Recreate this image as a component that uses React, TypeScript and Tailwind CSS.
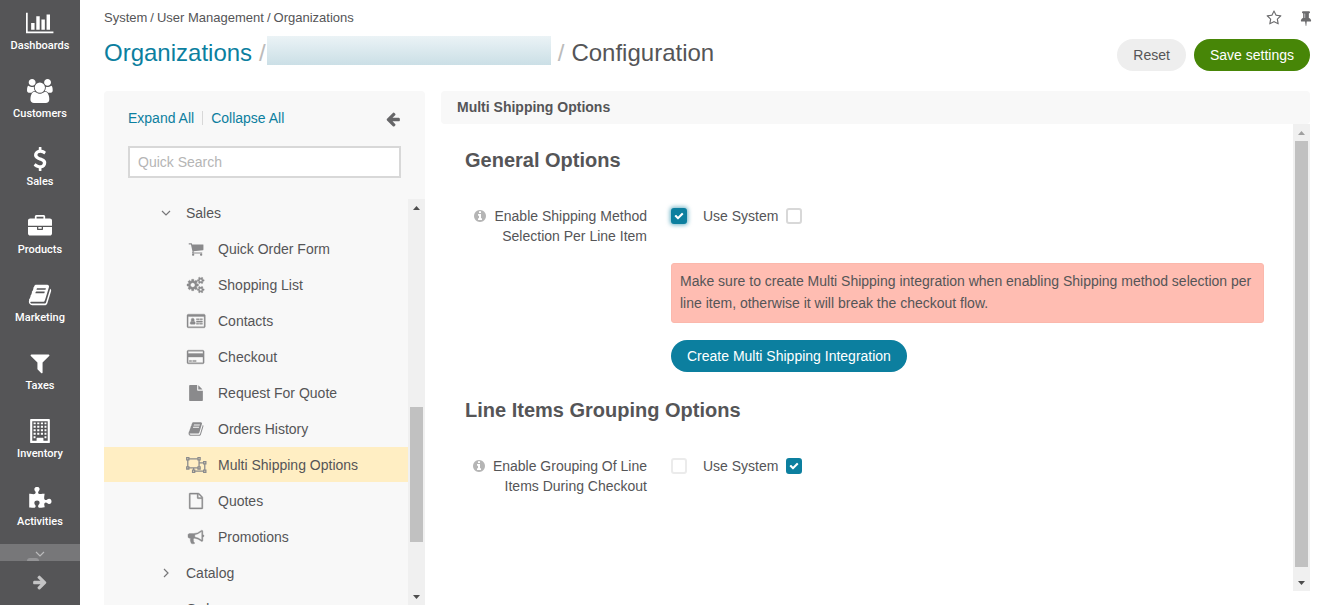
import { useState } from "react";
import type { ReactNode } from "react";

type Glyph = { w?: number; d: string; line?: string; bold?: boolean };

const glyphs: Record<string, Glyph> = {
  chart: {
    w: 2048,
    d: "M640 896v512h-256v-512h256zm384-512v1024h-256v-1024h256zm1024 1152v128h-2048v-1536h128v1408h1920zm-640-896v768h-256v-768h256zm384-384v1152h-256v-1152h256z",
  },
  users: {
    w: 1920,
    d: "M593 896q-162 5-265 128h-134q-82 0-138-40.5t-56-118.5q0-353 124-353 6 0 43.5 21t97.5 42.5 119 21.5q67 0 133-23-5 37-5 66 0 139 81 256zm1071 637q0 120-73 189.5t-194 69.5h-874q-121 0-194-69.5t-73-189.5q0-53 3.5-103.5t14-109 26.5-108.5 43-97.5 62-81 85.5-53.5 111.5-20q10 0 43 21.5t73 48 107 48 135 21.5 135-21.5 107-48 73-48 43-21.5q61 0 111.5 20t85.5 53.5 62 81 43 97.5 26.5 108.5 14 109 3.5 103.5zm-1024-1277q0 106-75 181t-181 75-181-75-75-181 75-181 181-75 181 75 75 181zm704 384q0 159-112.5 271.5t-271.5 112.5-271.5-112.5-112.5-271.5 112.5-271.5 271.5-112.5 271.5 112.5 112.5 271.5zm576 225q0 78-56 118.5t-138 40.5h-134q-103-123-265-128 81-117 81-256 0-29-5-66 66 23 133 23 59 0 119-21.5t97.5-42.5 43.5-21q124 0 124 353zm-128-609q0 106-75 181t-181 75-181-75-75-181 75-181 181-75 181 75 75 181z",
  },
  dollar: {
    d: "M1362 1185q0 153-99.5 263.5t-258.5 136.5v175q0 14-9 23t-23 9h-135q-13 0-22.5-9.5t-9.5-22.5v-175q-66-9-127.5-31t-101.5-44.5-74-48-46.5-37.5-17.5-18q-17-21-2-41l103-135q7-10 23-12 15-2 24 9l2 2q113 99 243 125 37 8 74 8 81 0 142.5-43t61.5-122q0-28-15-53t-33.5-42-58.5-37.5-66-32-80-32.5q-39-16-61.5-25t-61.5-26.5-62.5-31-56.5-35.5-53.5-42.5-43.5-49-35.5-58-21-66.5-8.5-78q0-138 98-242t255-134v-180q0-13 9.5-22.5t22.5-9.5h135q14 0 23 9t9 23v176q57 6 110.5 23t87 33.5 63.5 37.5 39 29 15 14q17 18 5 38l-81 146q-8 15-23 16-14 3-27-7-3-3-14.5-12t-39-26.5-58.5-32-74.5-26-85.5-11.5q-95 0-155 43t-60 111q0 26 8.5 48t29.5 41.5 39.5 33 56 31 60.5 27 70 27.5q53 20 81 31.5t76 35 75.5 42.5 62 50 53 63.5 31.5 76.5 13 94z",
  },
  briefcase: {
    d: "M640 256h512v-128h-512v128zm1152 640v480q0 66-47 113t-113 47h-1472q-66 0-113-47t-47-113v-480h672v160q0 26 19 45t45 19h320q26 0 45-19t19-45v-160h672zm-768 0v128h-256v-128h256zm768-480v384h-1792v-384q0-66 47-113t113-47h352v-160q0-40 28-68t68-28h576q40 0 68 28t28 68v160h352q66 0 113 47t47 113z",
  },
  book: {
    d: "M1703 478q40 57 18 129l-275 906q-19 64-76.5 107.5t-122.5 43.5h-923q-77 0-148.5-53.5t-99.5-131.5q-24-67-2-127 0-4 3-27t4-37q1-8-3-21.5t-3-19.5q2-11 8-21t16.5-23.5 16.5-23.5q23-38 45-91.5t30-91.5q3-10 .5-30t-.5-28q3-11 17-28t17-23q21-36 42-92t25-90q1-9-2.5-32t.5-28q4-13 22-30.5t22-22.5q19-26 42.5-84.5t27.5-96.5q1-8-3-25.5t-2-26.5q2-8 9-18t18-23 17-21q8-12 16.5-30.5t15-35 16-36 19.5-32 26.5-23.5 36-11.5 47.5 5.5l-1 3q38-9 51-9h761q74 0 114 56t18 130l-274 906q-36 119-71.5 153.5t-128.5 34.5h-869q-27 0-38 15-11 16-1 43 24 70 144 70h923q29 0 56-15.5t35-41.5l300-987q7-22 5-57 38 15 59 43zm-1064 2q-4 13 2 22.5t20 9.5h608q13 0 25.5-9.5t16.5-22.5l21-64q4-13-2-22.5t-20-9.5h-608q-13 0-25.5 9.5t-16.5 22.5zm-83 256q-4 13 2 22.5t20 9.5h608q13 0 25.5-9.5t16.5-22.5l21-64q4-13-2-22.5t-20-9.5h-608q-13 0-25.5 9.5t-16.5 22.5z",
  },
  filter: {
    d: "M1595 295q17 41-14 70l-493 493v742q0 42-39 59-13 5-25 5-27 0-45-19l-256-256q-19-19-19-45v-486l-493-493q-31-29-14-70 17-39 59-39h1280q42 0 59 39z",
  },
  building: {
    d: "M224 0h1344q64 0 64 64v1664q0 64-64 64h-1344q-64 0-64-64v-1664q0-64 64-64zM320 160v1472h320v-192q0-32 32-32h448q32 0 32 32v192h320v-1472zM416 256h160v144h-160zM688 256h160v144h-160zM960 256h160v144h-160zM1232 256h144v144h-144zM416 512h160v144h-160zM688 512h160v144h-160zM960 512h160v144h-160zM1232 512h144v144h-144zM416 768h160v144h-160zM688 768h160v144h-160zM960 768h160v144h-160zM1232 768h144v144h-144zM416 1024h160v144h-160zM688 1024h160v144h-160zM960 1024h160v144h-160zM1232 1024h144v144h-144zM416 1296h144v144h-144zM1232 1296h144v144h-144z",
  },
  puzzle: {
    d: "M1755 1083q0 81-44.5 135t-123.5 54q-41 0-77.5-17.5t-59-38-56.5-38-71-17.5q-110 0-110 124 0 39 16 115t15 115v5q-22 0-33 1-34 3-97.5 11.5t-115.5 13.5-98 5q-61 0-103-26.5t-42-83.5q0-37 17.5-71t38-56.5 38-59 17.5-77.5q0-79-54-123.5t-135-44.5q-84 0-143 45.5t-59 127.5q0 43 15 83t33.5 64.5 33.5 53 15 50.5q0 45-46 89-37 35-117 35-95 0-245-24-9-2-27.5-4t-27.5-4l-13-2q-1 0-3-1-2 0-2-1v-1024q2 1 17.5 3.5t34 5 21.5 3.5q150 24 245 24 80 0 117-35 46-44 46-89 0-22-15-50.5t-33.5-53-33.5-64.5-15-83q0-82 59-127.5t144-45.5q80 0 134 44.5t54 123.5q0 41-17.5 77.5t-38 59-38 56.5-17.5 71q0 57 42 83.5t103 26.5q64 0 180-15t163-17v2q-1 2-3.5 17.5t-5 34-3.5 21.5q-24 150-24 245 0 80 35 117 44 46 89 46 22 0 50.5-15t53-33.5 64.5-33.5 83-15q82 0 127.5 59t45.5 143z",
  },
  cart: {
    d: "M704 1536q0 52-38 90t-90 38-90-38-38-90 38-90 90-38 90 38 38 90zm896 0q0 52-38 90t-90 38-90-38-38-90 38-90 90-38 90 38 38 90zm128-1088v512q0 24-16.5 42.5t-40.5 21.5l-1044 122q13 60 13 70 0 16-24 64h920q26 0 45 19t19 45-19 45-45 19h-1024q-26 0-45-19t-19-45q0-11 8-31.5t16-36 21.5-40 15.5-29.5l-177-823h-204q-26 0-45-19t-19-45 19-45 45-19h256q16 0 28.5 6.5t19.5 15.5 13 24.5 8 26 5.5 29.5 4.5 26h1201q26 0 45 19t19 45z",
  },
  cogs: {
    w: 1920,
    bold: true,
    d: "M896 896q0-106-75-181t-181-75-181 75-75 181 75 181 181 75 181-75 75-181zm768 512q0-52-38-90t-90-38-90 38-38 90q0 53 37.5 90.5t90.5 37.5 90.5-37.5 37.5-90.5zm0-1024q0-52-38-90t-90-38-90 38-38 90q0 53 37.5 90.5t90.5 37.5 90.5-37.5 37.5-90.5zm-384 421v185q0 10-7 19.5t-16 10.5l-155 24q-11 35-32 76 34 48 90 115 7 11 7 20 0 12-7 19-23 30-82.5 89.5t-78.5 59.5q-11 0-21-7l-115-90q-37 19-77 31-11 108-23 155-7 24-30 24h-186q-11 0-20-7.5t-10-17.5l-23-153q-34-10-75-31l-118 89q-7 7-20 7-11 0-21-8-144-133-144-160 0-9 7-19 10-14 41-53t47-61q-23-44-35-82l-152-24q-10-1-17-9.5t-7-19.5v-185q0-10 7-19.5t16-10.5l155-24q11-35 32-76-34-48-90-115-7-11-7-20 0-12 7-20 22-30 82-89t79-59q11 0 21 7l115 90q34-18 77-32 11-108 23-154 7-24 30-24h186q11 0 20 7.5t10 17.5l23 153q34 10 75 31l118-89q8-7 20-7 11 0 21 8 144 133 144 160 0 8-7 19-12 16-42 54t-45 60q23 48 34 82l152 23q10 2 17 10.5t7 19.5zm640 533v140q0 16-149 31-12 27-30 52 51 113 51 138 0 4-4 7-122 71-124 71-8 0-46-47t-52-68q-20 2-30 2t-30-2q-14 21-52 68t-46 47q-2 0-124-71-4-3-4-7 0-25 51-138-18-25-30-52-149-15-149-31v-140q0-16 149-31 13-29 30-52-51-113-51-138 0-4 4-7 4-2 35-20t59-34 30-16q8 0 46 46.5t52 67.5q20-2 30-2t30 2q51-71 92-112l6-2q4 0 124 70 4 3 4 7 0 25-51 138 17 23 30 52 149 15 149 31zm0-1024v140q0 16-149 31-12 27-30 52 51 113 51 138 0 4-4 7-122 71-124 71-8 0-46-47t-52-68q-20 2-30 2t-30-2q-14 21-52 68t-46 47q-2 0-124-71-4-3-4-7 0-25 51-138-18-25-30-52-149-15-149-31v-140q0-16 149-31 13-29 30-52-51-113-51-138 0-4 4-7 4-2 35-20t59-34 30-16q8 0 46 46.5t52 67.5q20-2 30-2t30 2q51-71 92-112l6-2q4 0 124 70 4 3 4 7 0 25-51 138 17 23 30 52 149 15 149 31z",
  },
  card: {
    w: 2048,
    bold: true,
    d: "M160 128h1728q66 0 113 47t47 113v1216q0 66-47 113t-113 47h-1728q-66 0-113-47t-47-113v-1216q0-66 47-113t113-47zM128 384v1120q0 32 32 32h1728q32 0 32-32v-1120zM640 576a176 192 0 0 1 0 400a176 192 0 0 1 0-400zM464 928q80 90 176 90t176-90q112 60 112 220 0 116-96 116h-384q-96 0-96-116 0-160 112-220zM1056 640h320v128h-320zM1472 640h256v128h-256zM1056 896h672v128h-672zM1056 1136h256v128h-256zM1408 1136h320v128h-320z",
  },
  credit: {
    w: 1920,
    bold: true,
    d: "M160 128h1600q66 0 113 47t47 113v1216q0 66-47 113t-113 47h-1600q-66 0-113-47t-47-113v-1216q0-66 47-113t113-47zM160 256q-32 0-32 32v224h1664v-224q0-32-32-32zM128 896v608q0 32 32 32h1600q32 0 32-32v-608zM256 1280h256v128h-256zM640 1280h384v128h-384z",
  },
  file: {
    d: "M1152 512v-472q22 14 36 28l408 408q14 14 28 36h-472zm-128 32q0 40 28 68t68 28h544v1056q0 40-28 68t-68 28h-1344q-40 0-68-28t-28-68v-1600q0-40 28-68t68-28h800v544z",
  },
  ungroup: {
    w: 2304,
    d: "",
    line: "M80 80h240v240h-240zM1344 80h240v240h-240zM80 1104h240v240h-240zM1344 1104h240v240h-240zM320 200h1024M320 1224h1024M200 320v784M1464 320v784M1984 528h240v240h-240zM1984 1472h240v240h-240zM736 1472h240v240h-240zM1464 648h520M2104 768v704M976 1592h1008M856 1224v248",
  },
  page: {
    bold: true,
    d: "M1596 380q28 28 48 76t20 88v1152q0 40-28 68t-68 28h-1344q-40 0-68-28t-28-68v-1600q0-40 28-68t68-28h896q40 0 88 20t76 48zm-444-244v376h376q-10-29-22-41l-313-313q-12-12-41-22zm384 1528v-1024h-416q-40 0-68-28t-28-68v-416h-768v1536h1280z",
  },
  bullhorn: {
    bold: true,
    d: "M1664 640q53 0 90.5 37.5t37.5 90.5-37.5 90.5-90.5 37.5v384q0 52-38 90t-90 38q-417-347-812-380-58 19-91 66t-31 100.5 40 92.5q-20 33-23 65.5t6 58 33.5 55 48 50 61.5 50.5q-29 58-111.5 83t-168.5 11.5-132-55.5q-7-23-29.5-87.5t-32-94.5-23-89-15-101 3.5-98.5 22-110.5h-122q-66 0-113-47t-47-113v-192q0-66 47-113t113-47h480q435 0 896-384 52 0 90 38t38 90v384zm-128 604v-954q-394 302-768 343v270q377 42 768 341z",
  },
  arrow: {
    d: "M1600 960q0 54-37 91l-651 651q-39 37-91 37-51 0-90-37l-75-75q-38-38-38-91t38-91l293-293h-704q-52 0-84.5-37.5t-32.5-90.5v-128q0-53 32.5-90.5t84.5-37.5h704l-293-294q-38-36-38-90t38-90l75-75q38-38 90-38 53 0 91 38l651 651q37 35 37 90z",
  },
  check: {
    d: "M1671 566q0 40-28 68l-724 724-136 136q-28 28-68 28t-68-28l-136-136-362-362q-28-28-28-68t28-68l136-136q28-28 68-28t68 28l294 295 656-657q28-28 68-28t68 28l136 136q28 28 28 68z",
  },
  info: {
    d: "M1152 1376v-160q0-14-9-23t-23-9h-96v-512q0-14-9-23t-23-9h-320q-14 0-23 9t-9 23v160q0 14 9 23t23 9h96v320h-96q-14 0-23 9t-9 23v160q0 14 9 23t23 9h448q14 0 23-9t9-23zm-128-896v-160q0-14-9-23t-23-9h-192q-14 0-23 9t-9 23v160q0 14 9 23t23 9h192q14 0 23-9t9-23zm640 416q0 209-103 385.5t-279.5 279.5-385.5 103-385.5-103-279.5-279.5-103-385.5 103-385.5 279.5-279.5 385.5-103 385.5 103 279.5 279.5 103 385.5z",
  },
  pin: {
    d: "M800 864v-448q0-14-9-23t-23-9-23 9-9 23v448q0 14 9 23t23 9 23-9 9-23zm672 352q0 26-19 45t-45 19h-429l-51 483q-2 12-10.5 20.5t-20.5 8.5h-1q-27 0-32-27l-76-485h-404q-26 0-45-19t-19-45q0-123 78.5-221.5t177.5-98.5v-512q-52 0-90-38t-38-90 38-90 90-38h640q52 0 90 38t38 90-38 90-90 38v512q99 0 177.5 98.5t78.5 221.5z",
  },
  star: {
    d: "M1201 1004l306-297-422-62-189-382-189 382-422 62 306 297-73 421 378-199 377 199zm527-357q0 22-26 48l-363 354 86 500q1 7 1 20 0 50-41 50-19 0-40-12l-449-236-449 236q-22 12-40 12-21 0-31.5-14.5t-10.5-35.5q0-6 2-20l86-500-364-354q-25-27-25-48 0-37 56-46l502-73 225-455q19-41 49-41t49 41l225 455 502 73q56 9 56 46z",
  },
};

function Icon({ name, className }: { name: string; className: string }) {
  const glyph = glyphs[name];
  return (
    <svg viewBox={`0 0 ${glyph.w ?? 1792} 1792`} className={className} fill="currentColor" fillRule="evenodd" aria-hidden="true">
      {glyph.line ? (
        <path d={glyph.line} fill="none" stroke="currentColor" strokeWidth="144" />
      ) : (
        <path d={glyph.d} stroke="currentColor" strokeWidth={glyph.bold ? 40 : 0} />
      )}
    </svg>
  );
}

function Chevron({ className }: { className: string }) {
  return (
    <svg viewBox="0 0 10 6" className={className} fill="none" stroke="currentColor" strokeWidth="1.2" aria-hidden="true">
      <path d="M1 1l4 4 4-4" />
    </svg>
  );
}

const navItems = [
  { label: "Dashboards", icon: "chart" },
  { label: "Customers", icon: "users" },
  { label: "Sales", icon: "dollar" },
  { label: "Products", icon: "briefcase" },
  { label: "Marketing", icon: "book" },
  { label: "Taxes", icon: "filter" },
  { label: "Inventory", icon: "building" },
  { label: "Activities", icon: "puzzle" },
];

const treeItems = [
  { label: "Quick Order Form", icon: "cart" },
  { label: "Shopping List", icon: "cogs" },
  { label: "Contacts", icon: "card" },
  { label: "Checkout", icon: "credit" },
  { label: "Request For Quote", icon: "file" },
  { label: "Orders History", icon: "book" },
  { label: "Multi Shipping Options", icon: "ungroup" },
  { label: "Quotes", icon: "page" },
  { label: "Promotions", icon: "bullhorn" },
];

function ScrollArrow({ down, muted }: { down?: boolean; muted?: boolean }) {
  return (
    <span className="flex h-[17px] shrink-0 items-center justify-center">
      <svg
        viewBox="0 0 7 4"
        className={`h-1 w-[7px] ${down ? "rotate-180" : ""} ${muted ? "text-[#a0a0a0]" : "text-[#4d4d4d]"}`}
        fill="currentColor"
      >
        <path d="M3.5 0L7 4H0z" />
      </svg>
    </span>
  );
}

function Scrollbar({ children, mutedTop }: { children: ReactNode; mutedTop?: boolean }) {
  return (
    <div className="flex w-[17px] shrink-0 flex-col bg-[#f0f0f0]" aria-hidden="true">
      <ScrollArrow muted={mutedTop} />
      <div className="flex flex-1 flex-col px-0.5">{children}</div>
      <ScrollArrow down />
    </div>
  );
}

function Checkbox({
  id,
  initial,
  disabled,
  glow,
}: {
  id: string;
  initial?: boolean;
  disabled?: boolean;
  glow?: boolean;
}) {
  const [checked, setChecked] = useState(Boolean(initial));
  return (
    <span className="grid size-4 shrink-0">
      <input
        id={id}
        type="checkbox"
        checked={checked}
        disabled={disabled}
        onChange={(e) => setChecked(e.target.checked)}
        className={`col-start-1 row-start-1 size-4 appearance-none rounded-[3px] border-2 border-[#d8d8d8] bg-white checked:border-[#0c7f9f] checked:bg-[#0c7f9f] disabled:border-[#ebebeb] ${
          glow ? "shadow-[0_0_4px_1px_#0c7f9f99]" : ""
        }`}
      />
      {checked && (
        <Icon name="check" className="pointer-events-none col-start-1 row-start-1 size-[10px] place-self-center text-white" />
      )}
    </span>
  );
}

function Field({
  id,
  label,
  initial,
  disabled,
  glow,
  useSystem,
}: {
  id: string;
  label: string;
  initial?: boolean;
  disabled?: boolean;
  glow?: boolean;
  useSystem?: boolean;
}) {
  return (
    <div className="flex gap-6">
      <label htmlFor={id} className="w-[182px] shrink-0 text-right">
        <Icon name="info" className="mr-[7px] inline-block size-[14px] align-[-2px] text-[#b5b5b5]" />
        {label}
      </label>
      <div className="flex h-5 items-center">
        <Checkbox id={id} initial={initial} disabled={disabled} glow={glow} />
        <label htmlFor={`${id}-system`} className="ml-4 mr-2">
          Use System
        </label>
        <Checkbox id={`${id}-system`} initial={useSystem} />
      </div>
    </div>
  );
}

export default function App() {
  return (
    <div className="flex h-screen overflow-hidden bg-white font-['Liberation_Sans',Arial,sans-serif] text-sm text-[#555557]">
      <nav className="flex w-20 shrink-0 flex-col bg-[#555557] text-white" aria-label="Main">
        {navItems.map((item) => (
          <a key={item.label} href="#" className="flex h-[68px] shrink-0 flex-col items-center gap-[3px] pt-[11px]">
            <Icon name={item.icon} className="h-6" />
            <span className="font-['Roboto',sans-serif] text-[11px] leading-4 font-medium">{item.label}</span>
          </a>
        ))}
        <button type="button" aria-label="More" className="flex h-[17px] shrink-0 flex-col items-center bg-[#777779] text-[#bbbbbc]">
          <Chevron className="mt-[7px] h-[6px] w-[10px]" />
          <span className="mt-px mr-3.5 h-[3px] w-3 rounded-t-full bg-[#959597]" />
        </button>
        <button type="button" aria-label="Expand menu" className="flex flex-1 items-center justify-center pb-0.5 text-[#c4c4c5]">
          <Icon name="arrow" className="size-4" />
        </button>
      </nav>

      <main className="flex min-w-0 flex-1 flex-col pl-6 pr-3.5">
        <header className="flex h-[91px] shrink-0 justify-between pt-2">
          <div className="flex min-w-0 flex-col gap-2.5">
            <div className="flex gap-[3px] text-[13px] leading-[19px]">
              <span>System</span>
              <span>/</span>
              <span>User Management</span>
              <span>/</span>
              <span>Organizations</span>
            </div>
            <h1 className="flex h-8 text-2xl whitespace-nowrap">
              <a href="#" className="text-[#0c7f9f]">
                Organizations
              </a>
              <span className="mr-px ml-[7px] text-[#bbb]">/</span>
              <span className="-mt-px h-[29px] w-[284px] bg-linear-to-b from-[#ebf3f6] to-[#cbdfe6]" />
              <span className="mx-[7px] text-[#bbb]">/</span>
              <span>Configuration</span>
            </h1>
          </div>
          <div className="flex flex-col items-end gap-[11px]">
            <div className="flex h-5 items-center gap-4 text-[#6b6b6d]">
              <button type="button" aria-label="Add to favorites">
                <Icon name="star" className="size-4" />
              </button>
              <button type="button" aria-label="Pin" className="-mr-1">
                <Icon name="pin" className="size-4" />
              </button>
            </div>
            <div className="flex gap-2">
              <button type="button" className="h-8 rounded-full bg-[#eeeeee] px-4">
                Reset
              </button>
              <button type="button" className="h-8 rounded-full bg-[#478607] px-4 text-white">
                Save settings
              </button>
            </div>
          </div>
        </header>

        <div className="flex min-h-0 flex-1 gap-4">
          <aside className="flex w-[321px] shrink-0 flex-col rounded-t bg-[#f8f8f8]">
            <div className="flex flex-col gap-[18px] px-6 pt-[17px] pb-[17px]">
              <div className="flex h-5 items-center text-[#0c7f9f]">
                <button type="button">Expand All</button>
                <span className="mx-2 h-3.5 w-px bg-[#d8d8d8]" />
                <button type="button">Collapse All</button>
                <button type="button" aria-label="Collapse panel" className="ml-auto pt-0.5 text-[#666668]">
                  <Icon name="arrow" className="size-4 -scale-x-100" />
                </button>
              </div>
              <input
                type="text"
                aria-label="Quick Search"
                placeholder="Quick Search"
                className="h-8 w-full border-2 border-[#d8d8d8] bg-white px-2 placeholder:text-[#b5b5b5]"
              />
            </div>
            <div className="flex min-h-0 flex-1">
              <ul className="min-w-0 flex-1 overflow-hidden">
                <li className="flex h-9 items-center pl-[57px]">
                  <Chevron className="mr-[15px] h-[6px] w-[10px] text-[#777779]" />
                  Sales
                </li>
                {treeItems.map((item) => (
                  <li key={item.label} className="h-9">
                    <a
                      href="#"
                      className={`flex h-[35px] items-center gap-[11px] pl-[81px] ${
                        item.icon === "ungroup" ? "bg-[#ffeec3]" : ""
                      }`}
                    >
                      <span className="flex w-[22px] shrink-0 justify-center text-[#8a8a8c]">
                        <Icon name={item.icon} className="h-4 shrink-0 overflow-visible" />
                      </span>
                      {item.label}
                    </a>
                  </li>
                ))}
                <li className="flex h-9 items-center pl-[57px]">
                  <Chevron className="mr-[15px] h-[6px] w-[10px] -rotate-90 text-[#777779]" />
                  Catalog
                </li>
                <li className="flex h-9 items-center pl-[82px]">Orders</li>
              </ul>
              <div className="flex pt-1">
                <Scrollbar>
                  <div className="flex-[191]" />
                  <div className="flex-[135] bg-[#c1c1c1]" />
                  <div className="flex-[46]" />
                </Scrollbar>
              </div>
            </div>
          </aside>

          <section className="flex min-w-0 flex-1 flex-col pb-3.5">
            <h2 className="h-[33px] shrink-0 rounded bg-[#f8f8f8] px-4 leading-8 font-bold">Multi Shipping Options</h2>
            <div className="flex min-h-0 flex-1">
              <form className="min-w-0 flex-1 overflow-hidden pt-6 pr-[29px] pl-6">
                <h3 className="mb-[34px] text-xl leading-6 font-bold">General Options</h3>
                <Field id="per-line-item" label="Enable Shipping Method Selection Per Line Item" initial glow />
                <div className="mt-[17px] mb-[26px] ml-[206px] flex flex-col items-start gap-[17px]">
                  <p className="w-full rounded-[3px] border border-[#fbb8ac] bg-[#ffbdb2] px-2 pt-1.5 pb-2 leading-[22px]">
                    Make sure to create Multi Shipping integration when enabling Shipping method selection per line
                    item, otherwise it will break the checkout flow.
                  </p>
                  <button type="button" className="h-8 rounded-full bg-[#0c7f9f] px-4 text-white">
                    Create Multi Shipping Integration
                  </button>
                </div>
                <h3 className="mb-[34px] text-xl leading-6 font-bold">Line Items Grouping Options</h3>
                <Field id="grouping" label="Enable Grouping Of Line Items During Checkout" disabled useSystem />
              </form>
              <Scrollbar mutedTop>
                <div className="flex-1 bg-[#c1c1c1]" />
                <div className="h-[7px]" />
              </Scrollbar>
            </div>
          </section>
        </div>
      </main>
    </div>
  );
}
